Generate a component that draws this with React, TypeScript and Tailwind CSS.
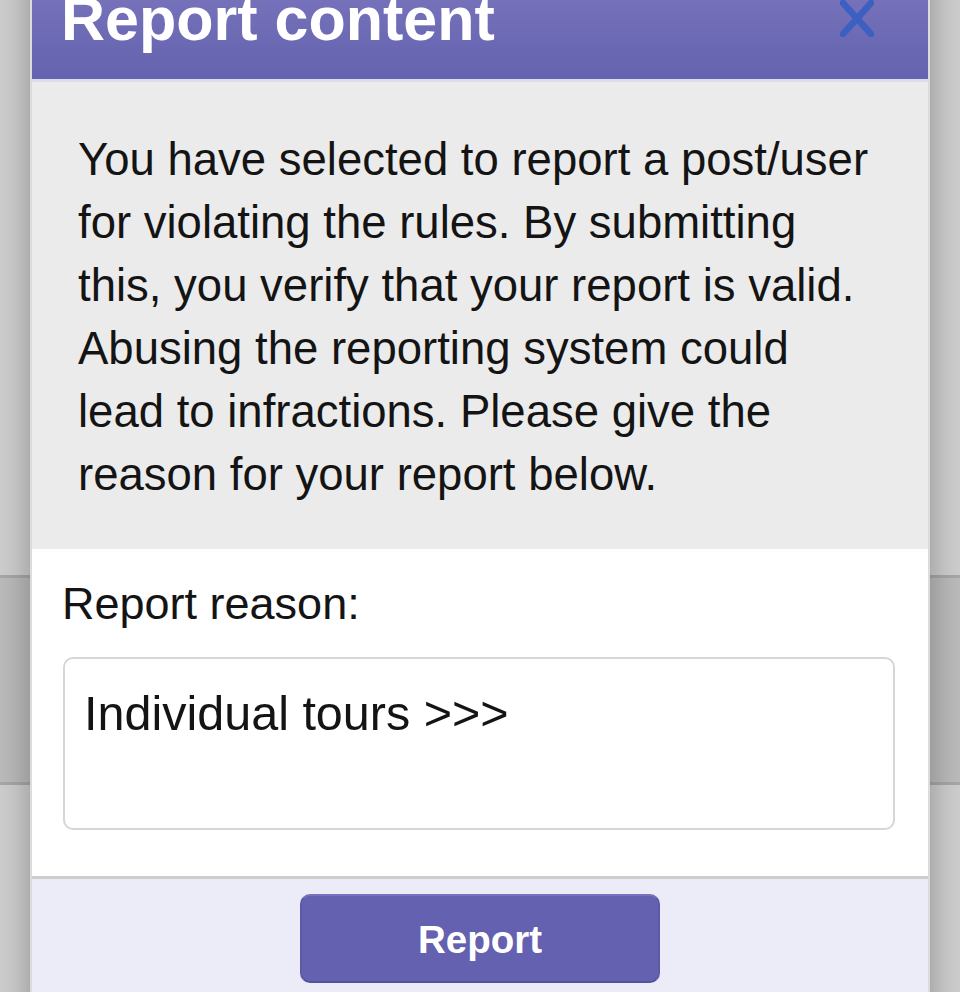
import { useState } from 'react';

export default function App() {
  const [reason, setReason] = useState('Individual tours >>>');

  return (
    <div className="relative w-[960px] h-[992px] overflow-hidden bg-[#d0d0d0] font-['Liberation_Sans',Arial,sans-serif]">
      {/* Page behind the overlay */}
      <div className="h-[575px] bg-[#cfcfcf]" />
      <div className="h-[210px] bg-[#bcbcbc] border-y-[3px] border-[#a9a9a9]" />
      <div className="h-[207px] bg-[#cfcfcf]" />

      {/* Modal */}
      <div className="absolute left-[30px] top-[-40px] w-[900px] border-x-2 border-[#dcdcdc] shadow-[0_0_34px_rgba(0,0,0,0.32)]">
        {/* Header */}
        <div className="h-[119px] flex items-start justify-between pt-[29px] pl-[29px] pr-[54px] bg-linear-to-b from-[#7d79bf] to-[#6562af]">
          <h2 className="text-[61px] leading-none font-bold text-white">Report content</h2>
          <svg width="34" height="37" viewBox="0 0 34 37" className="mt-[11px]">
            <line x1="3" y1="3" x2="31" y2="34" stroke="#3c60c2" strokeWidth="6.5" strokeLinecap="round" />
            <line x1="31" y1="3" x2="3" y2="34" stroke="#3c60c2" strokeWidth="6.5" strokeLinecap="round" />
          </svg>
        </div>
        <div className="h-[3px] bg-[#dddce8]" />

        {/* Notice */}
        <div className="bg-[#ebebeb] pt-[46px] pb-[43px] pl-[46px] pr-[54px]">
          <p className="text-[45.5px] leading-[63px] text-[#141414]">
            You have selected to report a post/user for violating the rules. By submitting this, you verify that your report is valid. Abusing the reporting system could lead to infractions. Please give the reason for your report below.
          </p>
        </div>

        {/* Reason */}
        <div className="bg-white pt-[23px] pb-[46px] pl-[31px] pr-[33px]">
          <label className="block -ml-[1px] text-[45px] leading-[63px] text-[#141414]">Report reason:</label>
          <textarea
            value={reason}
            onChange={e => setReason(e.target.value)}
            className="mt-[22px] block w-full h-[173px] resize-none rounded-[10px] border-2 border-[#d6d6d6] bg-white pt-[25px] pl-[19px] pr-4 text-[48.5px] leading-[1.2] text-[#141414] outline-none font-['Liberation_Sans',Arial,sans-serif]"
          />
        </div>

        {/* Footer */}
        <div className="border-t-[3px] border-[#cdcdcd] bg-[#ececf8] pt-[15px] pb-[40px] flex justify-center">
          <button className="w-[360px] h-[89px] rounded-[10px] bg-[#6461b0] border-2 border-t-[#7673bc] border-x-[#5d5aa8] border-b-[#5451a0] pt-[4px] text-[38.5px] leading-none font-bold text-white">
            Report
          </button>
        </div>
      </div>
    </div>
  );
}
